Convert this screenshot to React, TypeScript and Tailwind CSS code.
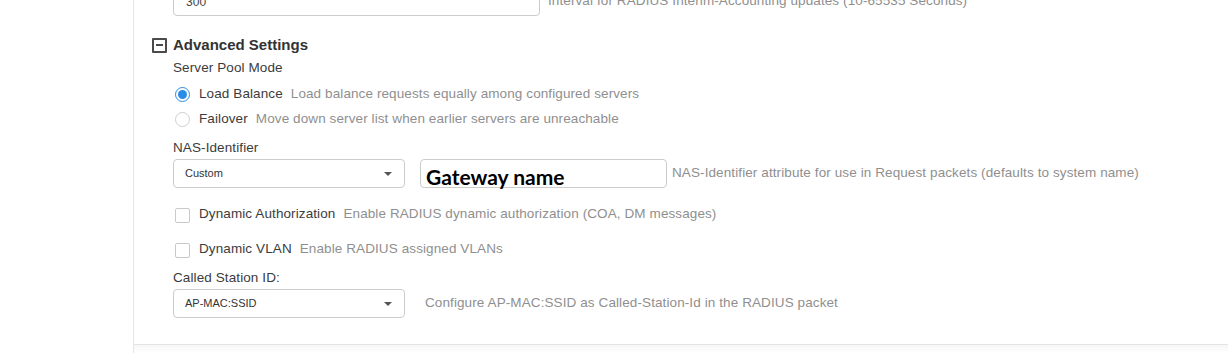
import React from "react";

type OptionProps = {
    label: string;
    hint: string;
    checked?: boolean;
};

const Radio = ({ label, hint, checked }: OptionProps) => (
    <div className="flex items-center h-full">
        {checked ? (
            <span className="w-[15px] h-[15px] rounded-full border-[1.5px] border-[#2a8ce6] flex items-center justify-center">
                <span className="w-[9px] h-[9px] rounded-full bg-[#2a8ce6]" />
            </span>
        ) : (
            <span className="w-[15px] h-[15px] rounded-full border border-[#cfcfcf]" />
        )}
        <span className="ml-[9px] text-[#3c3c3c]">{label}</span>
        <span className="ml-[8px] text-[#8f8f8f]">{hint}</span>
    </div>
);

const Checkbox = ({ label, hint }: OptionProps) => (
    <div className="flex items-center h-full">
        <span className="w-[15px] h-[15px] rounded-[2px] border border-[#c9c9c9] mt-[3px]" />
        <span className="ml-[9px] text-[#3c3c3c]">{label}</span>
        <span className="ml-[8px] text-[#8f8f8f]">{hint}</span>
    </div>
);

const Select = ({ value }: { value: string }) => (
    <div className="w-[232px] h-[29px] rounded-[4px] border border-[#cccccc] flex items-center justify-between pl-[11px] pr-[12px] shrink-0">
        <span className="text-[11px] tracking-normal text-[#333]">{value}</span>
        <span className="w-0 h-0 border-l-[4px] border-r-[4px] border-t-[4px] border-l-transparent border-r-transparent border-t-[#555]" />
    </div>
);

export default function App() {
    return (
        <div
            className="flex w-[1228px] h-[353px] bg-white overflow-hidden text-[13.5px] tracking-[0.1px]"
            style={{ fontFamily: '"Liberation Sans", Arial, sans-serif' }}
        >
            <div className="w-[134px] shrink-0 border-r border-[#e6e6e6]" />
            <div className="flex-1 flex flex-col">
                <div className="flex-1 flex flex-col pl-[39px]">
                    {/* accounting interval */}
                    <div className="flex items-center h-[29px] -mt-[13px]">
                        <div className="w-[367px] h-[29px] rounded-[4px] border border-[#cccccc] flex items-center pl-[12px] text-[#444] text-[12px]">
                            300
                        </div>
                        <span className="ml-[8px] text-[#8f8f8f]">
                            Interval for RADIUS Interim-Accounting updates (10-65535 Seconds)
                        </span>
                    </div>

                    {/* header */}
                    <div className="flex items-center h-[20px] mt-[19px] -ml-[21px]">
                        <span className="w-[15px] h-[15px] border-[2px] border-[#4a4a4a] rounded-[1px] flex items-center justify-center">
                            <span className="w-[7px] h-[2px] bg-[#4a4a4a]" />
                        </span>
                        <span className="ml-[6px] text-[15px] tracking-normal font-bold text-[#333]">Advanced Settings</span>
                    </div>

                    <div className="h-[26px] flex items-center text-[#3c3c3c]">Server Pool Mode</div>
                    <div className="h-[26px] pl-[2px]">
                        <Radio
                            checked
                            label="Load Balance"
                            hint="Load balance requests equally among configured servers"
                        />
                    </div>
                    <div className="h-[24px] pl-[2px]">
                        <Radio
                            label="Failover"
                            hint="Move down server list when earlier servers are unreachable"
                        />
                    </div>

                    {/* NAS identifier */}
                    <div className="h-[20px] mt-[7px] flex items-center text-[#3c3c3c]">NAS-Identifier</div>
                    <div className="flex items-center mt-[1px] h-[29px]">
                        <Select value="Custom" />
                        <div className="ml-[15px] w-[247px] h-[29px] rounded-[4px] border border-[#cccccc] flex items-end pl-[5px] shrink-0">
                            <span
                                className="text-[21px] leading-[20px] font-bold tracking-normal text-black"
                                style={{ fontFamily: "Lato, sans-serif" }}
                            >
                                Gateway name
                            </span>
                        </div>
                        <span className="ml-[5px] text-[#8f8f8f] whitespace-nowrap">
                            NAS-Identifier attribute for use in Request packets (defaults to system name)
                        </span>
                    </div>

                    <div className="h-[20px] mt-[16px] pl-[2px]">
                        <Checkbox
                            label="Dynamic Authorization"
                            hint="Enable RADIUS dynamic authorization (COA, DM messages)"
                        />
                    </div>
                    <div className="h-[20px] mt-[15px] pl-[2px]">
                        <Checkbox label="Dynamic VLAN" hint="Enable RADIUS assigned VLANs" />
                    </div>

                    {/* called station */}
                    <div className="h-[20px] mt-[9px] flex items-center text-[#3c3c3c]">Called Station ID:</div>
                    <div className="flex items-center mt-[1px] h-[29px]">
                        <Select value="AP-MAC:SSID" />
                        <span className="ml-[20px] text-[#8f8f8f]">
                            Configure AP-MAC:SSID as Called-Station-Id in the RADIUS packet
                        </span>
                    </div>
                </div>
                <div className="h-[9px] border-t border-[#e4e4e4] bg-gradient-to-b from-[#f6f6f6] to-white" />
            </div>
        </div>
    );
}
